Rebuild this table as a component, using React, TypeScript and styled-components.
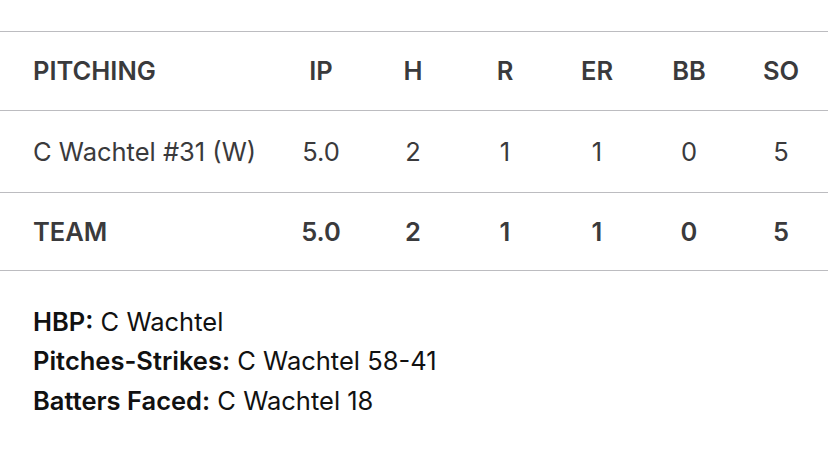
import React from "react";
import styled, { createGlobalStyle } from "styled-components";

const Global = createGlobalStyle`
  html, body { margin: 0; padding: 0; background: #fff; }
  body { font-family: Inter, "Noto Sans", sans-serif; -webkit-font-smoothing: antialiased; }
`;

const Page = styled.div`
  width: 828px;
  height: 463px;
  background: #fff;
  padding-top: 31px;
  box-sizing: border-box;
`;

const Table = styled.div`
  border-top: 1.5px solid #bcbcc0;
`;

const Row = styled.div<{ $h: number }>`
  display: grid;
  grid-template-columns: 275px repeat(6, 92px);
  align-items: center;
  height: ${(p) => p.$h}px;
  border-bottom: 1.5px solid #bcbcc0;
  box-sizing: border-box;
`;

const NameCell = styled.div<{ $bold?: boolean }>`
  padding-left: 33px;
  font-size: 25.5px;
  font-weight: ${(p) => (p.$bold ? 600 : 400)};
  color: #3a3a3c;
  white-space: nowrap;
`;

const NumCell = styled.div<{ $bold?: boolean }>`
  text-align: center;
  font-size: 25.5px;
  font-weight: ${(p) => (p.$bold ? 600 : 400)};
  color: #3a3a3c;
`;

const Notes = styled.div`
  padding: 31px 0 0 33px;
  display: flex;
  flex-direction: column;
`;

const Note = styled.div`
  font-size: 25.5px;
  line-height: 39.5px;
  color: #111;
  white-space: nowrap;
  b { font-weight: 600; }
`;

const cols = ["IP", "H", "R", "ER", "BB", "SO"];
const pitcher = ["5.0", "2", "1", "1", "0", "5"];

export default function App() {
  return (
    <Page>
      <Global />
      <Table>
        <Row $h={78.5}>
          <NameCell $bold>PITCHING</NameCell>
          {cols.map((c) => (
            <NumCell key={c} $bold>{c}</NumCell>
          ))}
        </Row>
        <Row $h={82}>
          <NameCell>C Wachtel #31 (W)</NameCell>
          {pitcher.map((v, i) => (
            <NumCell key={i}>{v}</NumCell>
          ))}
        </Row>
        <Row $h={78}>
          <NameCell $bold>TEAM</NameCell>
          {pitcher.map((v, i) => (
            <NumCell key={i} $bold>{v}</NumCell>
          ))}
        </Row>
      </Table>
      <Notes>
        <Note><b>HBP:</b> C Wachtel</Note>
        <Note><b>Pitches-Strikes:</b> C Wachtel 58-41</Note>
        <Note><b>Batters Faced:</b> C Wachtel 18</Note>
      </Notes>
    </Page>
  );
}
